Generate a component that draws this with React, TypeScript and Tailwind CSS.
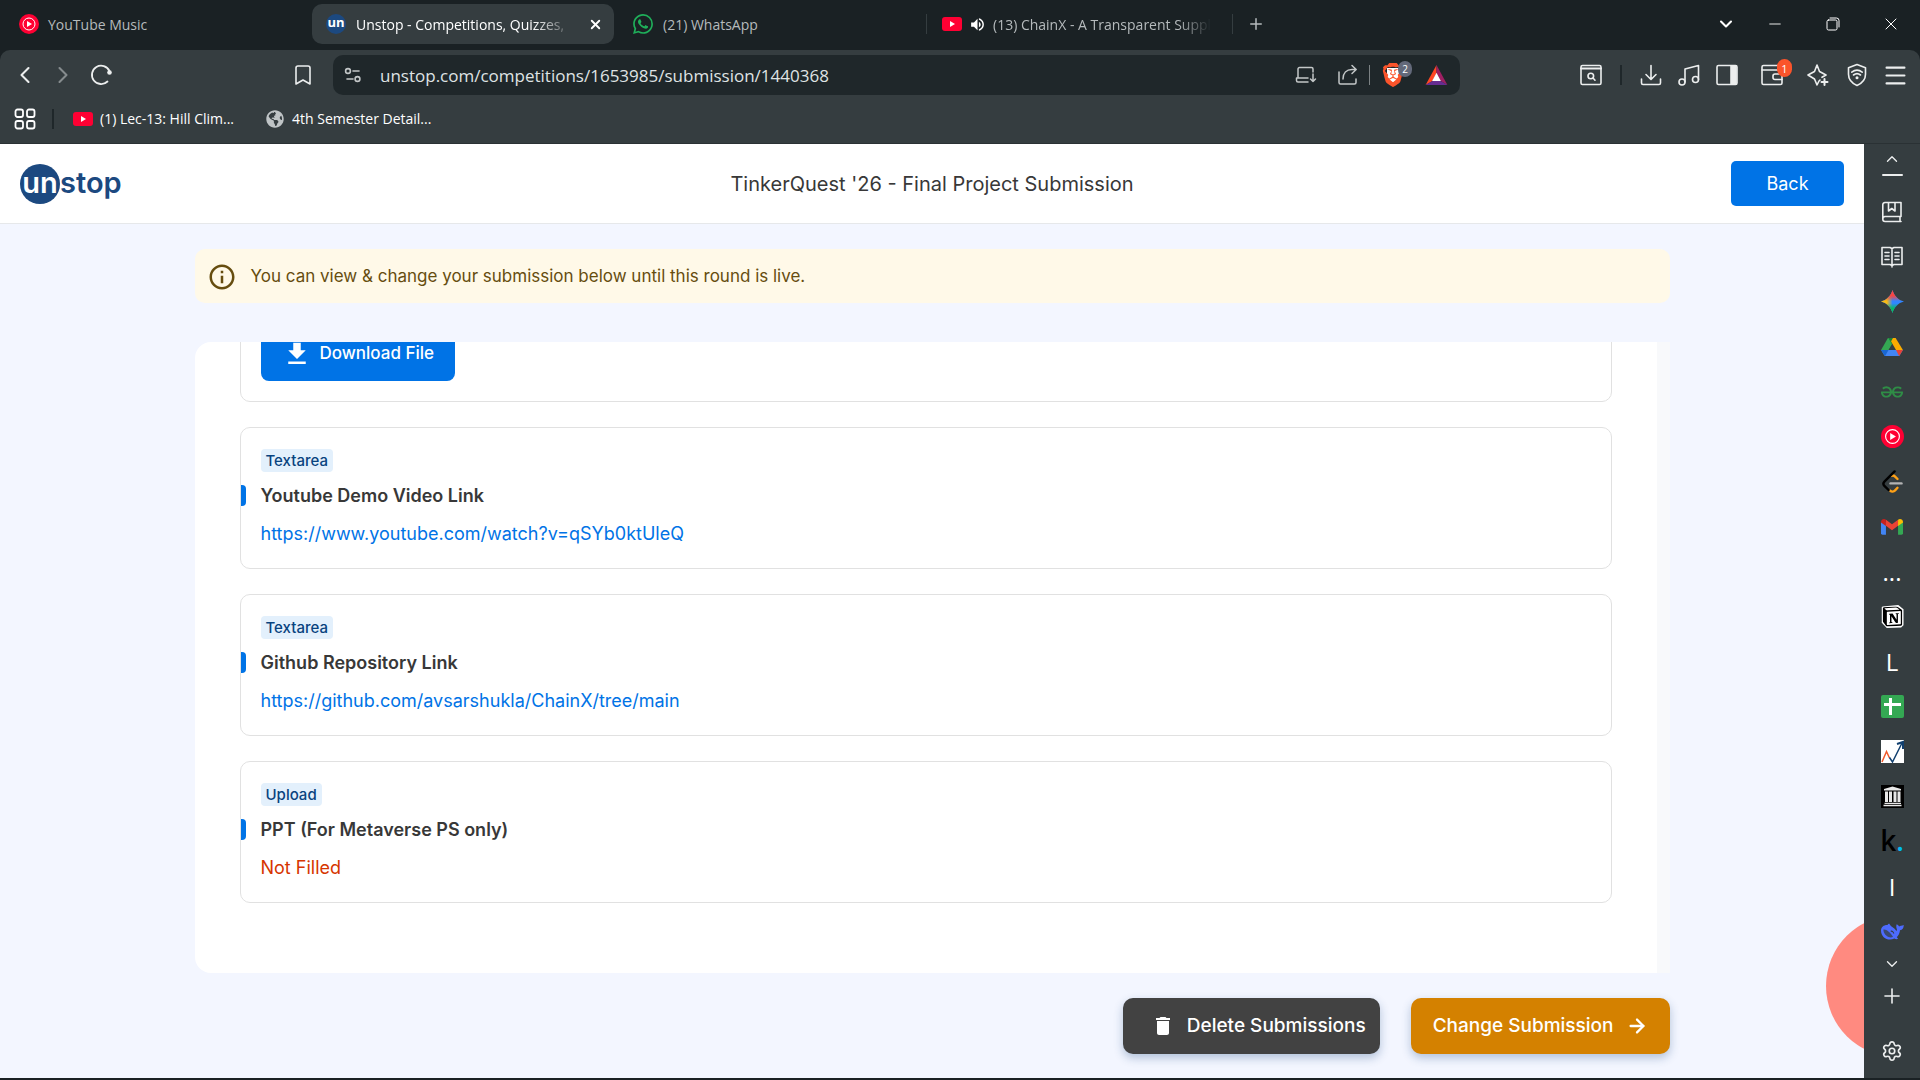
import React from 'react';
import {
  SiBrave,
  SiGeeksforgeeks,
  SiNotion,
  SiWhatsapp,
} from 'react-icons/si';
import { FaGlobeAmericas } from 'react-icons/fa';
import { MdDelete, MdOutlineInfo, MdDownload, MdVolumeUp } from 'react-icons/md';
import {
  ArrowRight,
  Bookmark,
  ChevronDown,
  ChevronLeft,
  ChevronRight,
  ChevronUp,
  Menu,
  Minus,
  Plus,
  Settings,
  X,
} from 'lucide-react';

// Shared styles for the browser chrome
const chromeFont = "font-['Open_Sans','Noto_Sans',sans-serif]";
const pageFont = "font-['Inter','Liberation_Sans',sans-serif]";
const toolButton = 'relative flex h-9 w-[38px] shrink-0 items-center justify-center';
const windowButton = 'flex h-10 w-[58px] items-center justify-center text-white';

const line = {
  fill: 'none',
  stroke: 'currentColor',
  strokeLinecap: 'round' as const,
  strokeLinejoin: 'round' as const,
};

/* ---------- logos ---------- */

const YoutubeMusicLogo: React.FC<{ className?: string }> = ({ className }) => (
  <svg viewBox="0 0 24 24" className={className}>
    <circle cx="12" cy="12" r="12" fill="#ff0033" />
    <circle cx="12" cy="12" r="7.2" fill="none" stroke="#fff" strokeWidth="1.2" />
    <path d="M9.6 8.4v7.2l6-3.6z" fill="#fff" />
  </svg>
);

const YoutubeLogo: React.FC = () => (
  <svg viewBox="0 0 20 14" className="h-3.5 w-5 shrink-0">
    <rect width="20" height="14" rx="3" fill="#ff0033" />
    <path d="M8 4v6l5-3z" fill="#fff" />
  </svg>
);

const GeminiLogo: React.FC = () => (
  <svg viewBox="0 0 24 24" className="size-[23px]">
    <defs>
      <linearGradient id="gemini-top" x1="0" y1="0" x2="0" y2="1">
        <stop offset="0" stopColor="#f94543" />
        <stop offset="0.25" stopColor="#f94543" />
        <stop offset="0.48" stopColor="#f94543" stopOpacity="0" />
      </linearGradient>
      <linearGradient id="gemini-left" x1="0" y1="0" x2="1" y2="0">
        <stop offset="0" stopColor="#fabc12" />
        <stop offset="0.25" stopColor="#fabc12" />
        <stop offset="0.5" stopColor="#fabc12" stopOpacity="0" />
      </linearGradient>
      <linearGradient id="gemini-bottom" x1="0" y1="1" x2="0" y2="0">
        <stop offset="0" stopColor="#08b962" />
        <stop offset="0.2" stopColor="#08b962" />
        <stop offset="0.42" stopColor="#08b962" stopOpacity="0" />
      </linearGradient>
    </defs>
    {['#3186ff', 'url(#gemini-left)', 'url(#gemini-top)', 'url(#gemini-bottom)'].map((fill) => (
      <path key={fill} fill={fill} d="M12 0c1.500 6 6 10.500 12 12-6 1.500-10.500 6-12 12-1.500-6-6-10.500-12-12 6-1.500 10.500-6 12-12z" />
    ))}
  </svg>
);

const DriveLogo: React.FC = () => (
  <svg viewBox="0 0 24 22" className="h-5 w-[22px]">
    <path d="M8 1h8l-4 7-3.800 6.400H0L7 2z" fill="#34a853" />
    <path d="M8 1h4l2 4-2 3z" fill="#188038" />
    <path d="M12 1h4l8 13.400h-7.600L10.600 4z" fill="#fbab00" />
    <path d="M8.500 1h4.500l-2 3.800z" fill="#188038" />
    <path d="M12 8.400l3.500 6h-7z" fill="#353d40" />
    <path d="M0 14.400h24L20 21H4z" fill="#4285f4" />
    <path d="M0 14.400h8.200L4.400 21H4z" fill="#1967d2" />
    <path d="M24 14.400h-7.600L19.800 21h.2z" fill="#ea4335" />
  </svg>
);

const LeetcodeLogo: React.FC = () => (
  <svg viewBox="0 0 24 24" className="size-6" fill="none" strokeWidth="2.400" strokeLinecap="round">
    <path d="M17.500 17.800l-2.400 2.600a3.600 3.600 0 0 1-5 .2" stroke="#ffa116" />
    <path d="M17.500 9l-2.400-2.400a3.400 3.400 0 0 0-3.600-.8" stroke="#ffa116" />
    <path d="M14.600 1.400L4.400 11.600a3 3 0 0 0 0 4.200l4.200 4.200" stroke="#000" />
    <path d="M10.500 13.400h11" stroke="#b3b3b3" />
  </svg>
);

const GmailLogo: React.FC = () => (
  <svg viewBox="0 0 24 18" className="h-[17px] w-[22px]">
    <path d="M0 4h5.400v14H1.600A1.600 1.600 0 0 1 0 16.400z" fill="#4285f4" />
    <path d="M18.600 4H24v12.400a1.600 1.600 0 0 1-1.600 1.600h-3.800z" fill="#34a853" />
    <path d="M5.400 1.600L12 6.600l6.600-5v6.600L12 13.200 5.400 8.200z" fill="#ea4335" />
    <path d="M18.600 1.600c2.200-1.600 5.400-.3 5.400 2.500v.4l-5.400 4z" fill="#fbbc04" />
    <path d="M5.400 1.600C3.200 0 0 1.300 0 4.100v.4l5.400 4z" fill="#c5221f" />
  </svg>
);

const NotionLogo: React.FC = () => (
  <svg viewBox="0 0 24 24" className="size-[23px]">
    <path d="M1.500 1.500L18 0l5.500 4.500V21L21 23.500 6 24 .8 18.500V2.500z" fill="#fff" />
    <SiNotion x="1.500" y="1.500" size={21} color="#000" />
  </svg>
);

const SheetLogo: React.FC = () => (
  <svg viewBox="0 0 23 23" className="size-[23px]">
    <rect width="23" height="23" rx="2" fill="#34a853" />
    <path d="M9.500 3v17M3 9.500h17" stroke="#fff" strokeWidth="3" />
  </svg>
);

const ChartLogo: React.FC = () => (
  <svg viewBox="0 0 23 23" className="size-[23px]" fill="none" strokeWidth="1.500">
    <rect width="23" height="23" fill="#fff" />
    <path d="M1 22L5.500 11.500 8.500 18" stroke="#f0592a" />
    <path d="M8.500 17.500l3 4.500L21 3" stroke="#12406f" />
    <path d="M16 4l6-2v7" stroke="#12406f" strokeWidth="2" />
  </svg>
);

const ArchiveLogo: React.FC = () => (
  <svg viewBox="0 0 23 23" className="size-[23px]">
    <rect width="23" height="23" fill="#000" />
    <path
      d="M11.500 1.500L20 4v1.500H3V4zM4 6.500h3V17H4zM8 6.500h3V17H8zM12.500 6.500h3V17h-3zM16.500 6.500h3V17h-3zM3.500 17.700h16.500v1.300H3.500zM2.500 19.800H20.500v1.400H2.500z"
      fill="#e8e8e8"
    />
  </svg>
);

const WhaleLogo: React.FC = () => (
  <svg viewBox="0 0 24 18" className="h-[18px] w-6">
    <path
      d="M1 7.500C1 4 4 1.800 7.500 2c.4-.8 1-1.300 1.900-1.300.5 2 2.800 3 4.600 4.600 1.200 1 1.900 2.200 2.500 2.700.6-.6.500-1.500.2-2.300-.5-1.400-.6-3 0-4.400 1.200.4 1.900 1.300 2.400 2.200.9-1 2.900-.5 4.600-1.500.2 2.600-1.200 5-3.700 5.300-.3 3-1.500 5.300-3.200 7l1.300 1.500c-1.300.8-2.600.5-3.700-.3C8.500 18.500 1 15 1 7.500z"
      fill="#4d6bfe"
    />
    <path d="M3.400 6.500c3-.6 7 3.200 9.600 7.300-2 1.200-4.500.6-6.500-1C4.600 11.200 3.300 9 3.400 6.500z" fill="#353d40" opacity="0.75" />
    <path d="M10.800 8.300c1.400-.4 2.600.6 2.900 2.200" stroke="#353d40" strokeWidth="1.200" fill="none" />
  </svg>
);

const BatLogo: React.FC = () => (
  <svg viewBox="0 0 24 22" className="h-5 w-[23px]">
    <path d="M12 0L0 22l7.500-4.300L12 9z" fill="#ff4724" />
    <path d="M12 0l12 22-7.500-4.300L12 9z" fill="#9e1f63" />
    <path d="M0 22h24l-7.500-4.300h-9z" fill="#662d91" />
    <path d="M12 8.600l4.800 9.100H7.200z" fill="#fff" />
  </svg>
);

const UnstopLogo: React.FC = () => (
  <a href="#home" aria-label="unstop" className="flex items-center text-[29px] leading-10 font-semibold text-[#1c4980]">
    <span className="flex size-10 items-center justify-center rounded-full bg-[#1c4980] pb-0.5 text-white">un</span>
    <span className="pb-0.5">stop</span>
  </a>
);

/* ---------- tab strip ---------- */

const TabStrip: React.FC = () => (
  <div className="flex h-[50px] items-center bg-[#1a2124] pb-0.5 pl-[5px] text-[14px] text-[#b5babc]">
    <div role="tablist" className="flex h-10 items-center gap-[5px]">
      <button role="tab" className="flex h-10 w-[302px] items-center gap-[9px] px-3.5">
        <YoutubeMusicLogo className="size-5" />
        <span>YouTube Music</span>
      </button>
      <div className="flex h-10 w-[302px] items-center rounded-[10px] bg-[#353d40] pr-[9px] pl-3.5 text-white">
        <button role="tab" aria-selected="true" className="flex h-10 min-w-0 flex-1 items-center gap-2.5">
          <span className="flex size-5 shrink-0 items-center justify-center rounded-full bg-[#1c4980] pb-0.5 text-[13px] font-bold">un</span>
          <span className="whitespace-nowrap mask-r-from-85% mask-r-to-105%">Unstop - Competitions, Quizzes,</span>
        </button>
        <button aria-label="Close tab" className="flex w-5 items-center justify-center">
          <X size={15} strokeWidth={3} />
        </button>
      </div>
      <button role="tab" className="flex h-10 w-[302px] items-center gap-2.5 px-3.5">
        <SiWhatsapp className="size-5 text-[#1faf5a]" />
        <span>(21) WhatsApp</span>
      </button>
      <button role="tab" className="flex h-5 w-[307px] items-center gap-[7px] border-x border-[#353d40] pl-[15px]">
        <YoutubeLogo />
        <MdVolumeUp className="size-[17px] shrink-0 text-white" />
        <span className="whitespace-nowrap mask-r-from-85%">(13) ChainX - A Transparent Suppl</span>
      </button>
      <button aria-label="New tab" className="ml-1.5 flex size-6 items-center justify-center">
        <Plus size={18} />
      </button>
    </div>
    <div className="ml-auto flex">
      <button aria-label="Search tabs" className="flex h-10 w-10 items-center justify-center text-white">
        <ChevronDown size={20} strokeWidth={2.5} />
      </button>
      <button aria-label="Minimize" className={windowButton}>
        <Minus size={18} strokeWidth={1.2} />
      </button>
      <button aria-label="Restore" className={windowButton}>
        <svg viewBox="0 0 14 14" className="size-3.5" {...line}>
          <rect x="1" y="3" width="10" height="10" rx="1.5" />
          <path d="M4 1h6.500A2.500 2.500 0 0 1 13 3.500V10" />
        </svg>
      </button>
      <button aria-label="Close" className={windowButton}>
        <X size={20} strokeWidth={1.2} />
      </button>
    </div>
  </div>
);

/* ---------- toolbar ---------- */

const AddressBar: React.FC = () => (
  <div className="flex h-10 flex-1 items-center rounded-[10px] bg-[#1f272a] pr-1 text-[#c3c7c8]">
    <button aria-label="Site information" className="flex h-10 w-10 shrink-0 items-center justify-center">
      <svg viewBox="0 0 18 16" className="h-4 w-[18px]" {...line} strokeWidth="1.600">
        <circle cx="4" cy="4" r="2.400" />
        <path d="M9 4h6" />
        <circle cx="13.500" cy="12" r="2.400" />
        <path d="M3 12h6" />
      </svg>
    </button>
    <input
      aria-label="Address"
      defaultValue="unstop.com/competitions/1653985/submission/1440368"
      className="h-10 min-w-0 flex-1 bg-transparent pl-[7px] text-[17px] text-[#dfe3e4] outline-none"
    />
    <button aria-label="Install app" className="flex h-9 w-[42px] items-center justify-center">
      <svg viewBox="0 0 22 18" className="h-[18px] w-[22px]" {...line} strokeWidth="1.500">
        <path d="M18 6V3a1.500 1.500 0 0 0-1.500-1.500h-12A1.500 1.500 0 0 0 3 3v9M13 12H1.500v2.500A1.500 1.500 0 0 0 3 16h10" />
        <path d="M18 8v7.500M15.500 13l2.500 2.500 2.500-2.500" />
      </svg>
    </button>
    <button aria-label="Share" className="flex h-9 w-[42px] items-center justify-center">
      <svg viewBox="0 0 22 22" className="size-[22px]" {...line} strokeWidth="1.500">
        <path d="M2 8v10.500A1.500 1.500 0 0 0 3.500 20h14a1.500 1.500 0 0 0 1.500-1.500V15M6 15c0-6 3.500-9.500 9-9.500h4M15 1.500l4.200 4-4.200 4" />
      </svg>
    </button>
    <span className="h-5 w-px bg-[#7b8183]" />
    <button aria-label="Brave Shields" className="relative flex h-9 w-[46px] items-center justify-center">
      <svg viewBox="0 0 24 24" className="size-6">
        <path d="M6 5h12v10l-6 7-6-7z" fill="#fff" />
        <SiBrave size={24} color="#fb542b" />
      </svg>
      <span className="absolute top-1 right-1 flex h-4 w-3.5 items-center justify-center rounded-full bg-[#63697a] text-[10px] leading-none text-white">2</span>
    </button>
    <button aria-label="Rewards" className="flex h-9 w-10 items-center justify-center">
      <BatLogo />
    </button>
  </div>
);

const Toolbar: React.FC = () => (
  <div className="flex h-[50px] items-center px-1.5 text-[#eceeee]">
    <button aria-label="Go back" className={toolButton}>
      <ChevronLeft size={28} strokeWidth={1.8} />
    </button>
    <button aria-label="Go forward" className={`${toolButton} text-[#868c8e]`}>
      <ChevronRight size={28} strokeWidth={1.8} />
    </button>
    <button aria-label="Reload" className={toolButton}>
      <svg viewBox="0 0 24 24" className="size-6" {...line} strokeWidth="1.800">
        <path d="M18.500 18.500A9.200 9.200 0 1 1 20.500 8" />
        <circle cx="20.500" cy="9.500" r="2.300" fill="currentColor" stroke="none" />
      </svg>
    </button>
    <div className="mr-28 ml-[164px] flex min-w-0 flex-1 items-center gap-[11px]">
      <button aria-label="Bookmark this page" className={toolButton}>
        <Bookmark size={24} strokeWidth={1.6} />
      </button>
      <AddressBar />
    </div>
    <button aria-label="Search page" className={toolButton}>
      <svg viewBox="0 0 22 22" className="size-[22px]" {...line} strokeWidth="1.600">
        <rect x="1" y="1.500" width="20" height="19" rx="1.500" />
        <path d="M1 4.500h20" strokeWidth="2" />
        <circle cx="10.800" cy="12" r="2.800" />
        <path d="M13 14l2 2.200" />
      </svg>
    </button>
    <span className="mx-2.5 h-5 w-0.5 bg-[#1f272a]" />
    <button aria-label="Downloads" className={toolButton}>
      <svg viewBox="0 0 22 22" className="size-[22px]" {...line} strokeWidth="1.600">
        <path d="M11 1.500V15M6 10.500l5 5 5-5M1.500 15v4A1.500 1.500 0 0 0 3 20.500h16a1.500 1.500 0 0 0 1.500-1.500v-4" />
      </svg>
    </button>
    <button aria-label="Media" className={toolButton}>
      <svg viewBox="0 0 22 22" className="size-[22px]" {...line} strokeWidth="1.600">
        <circle cx="4" cy="18" r="3" />
        <circle cx="17.500" cy="15.500" r="3" />
        <path d="M7 18V5l13.500-3.500v14M7 9" />
      </svg>
    </button>
    <button aria-label="Side panel" className={toolButton}>
      <svg viewBox="0 0 22 22" className="size-[22px]" {...line} strokeWidth="1.600">
        <rect x="1" y="1.500" width="20" height="19" rx="1.500" />
        <path d="M15 2h5v18h-5z" fill="currentColor" />
      </svg>
    </button>
    <button aria-label="Wallet" className="relative flex h-9 w-[52px] items-center justify-center">
      <svg viewBox="0 0 22 22" className="size-[22px]" {...line} strokeWidth="1.600">
        <rect x="1" y="1.500" width="20" height="19" rx="1.500" />
        <path d="M1 6h20M21 10h-7a2 2 0 0 0-2 2v1.500a2 2 0 0 0 2 2h7" />
      </svg>
      <span className="absolute top-0.5 right-1.5 flex h-[18px] w-[15px] items-center justify-center rounded-full bg-[#fb542b] text-[11px] leading-none text-white">1</span>
    </button>
    <button aria-label="Leo AI" className="flex h-9 w-10 items-center justify-center">
      <svg viewBox="0 0 22 22" className="size-[22px]" {...line} strokeWidth="1.600">
        <path d="M13 16l-1 1-2 4-2.500-6L1 11l6.500-3.500L10 1l2.500 6.500L19 11l-4 2.300" />
        <path d="M17.500 15v6M14.500 18h6" strokeWidth="2" />
      </svg>
    </button>
    <button aria-label="VPN" className={toolButton}>
      <svg viewBox="0 0 22 24" className="h-6 w-[22px]" {...line} strokeWidth="1.600">
        <path d="M11 1.500l8.500 3.300v6.400c0 5-3 8.800-8.500 11.300-5.500-2.500-8.500-6.300-8.500-11.300V4.800z" />
        <path d="M5.800 9.200c3.200-2.600 7.200-2.600 10.400 0M7.500 12c2.200-1.700 4.800-1.700 7 0" />
        <circle cx="11" cy="14.800" r="1.500" fill="currentColor" stroke="none" />
      </svg>
    </button>
    <button aria-label="Menu" className={toolButton}>
      <Menu size={27} strokeWidth={1.8} />
    </button>
  </div>
);

const BookmarkBar: React.FC = () => (
  <nav aria-label="Bookmarks" className="flex h-11 items-center border-b border-[#2a3134] pb-1.5 pl-3.5 text-[14px] text-white">
    <button aria-label="All bookmarks" className="flex size-[22px] items-center justify-center">
      <svg viewBox="0 0 22 22" className="size-[22px]" {...line} strokeWidth="1.800">
        <rect x="1.500" y="1.500" width="7.500" height="7.500" rx="2" />
        <rect x="13" y="1.500" width="7.500" height="7.500" rx="2" />
        <rect x="1.500" y="13" width="7.500" height="7.500" rx="2" />
        <rect x="13" y="13" width="7.500" height="7.500" rx="2" />
      </svg>
    </button>
    <span className="mr-[19px] ml-4 h-5 w-0.5 bg-[#1f272a]" />
    <a href="#lec-13" className="flex items-center gap-[7px]">
      <YoutubeLogo />
      (1) Lec-13: Hill Clim...
    </a>
    <a href="#semester" className="ml-8 flex items-center gap-2">
      <FaGlobeAmericas className="size-[18px] text-[#bfc4c6]" />
      4th Semester Detail...
    </a>
  </nav>
);

/* ---------- sidebar ---------- */

const sidebarItems: { label: string; icon: React.ReactNode }[] = [
  {
    label: 'Bookmarks',
    icon: (
      <svg viewBox="0 0 22 22" className="size-[22px]" {...line} strokeWidth="1.600">
        <path d="M20 15.500V1.500H4A2.200 2.200 0 0 0 1.800 3.700v14.600A2.200 2.200 0 0 0 4 20.500h16M20 15.500H4a2.400 2.400 0 0 0-2.200 2.400M19 15.500v5M7.500 1.500V10l3.300-2.500L14 10V1.500" />
      </svg>
    ),
  },
  {
    label: 'Reading list',
    icon: (
      <svg viewBox="0 0 22 22" className="size-[22px]" {...line} strokeWidth="1.600">
        <path d="M11 3.500V21M1 1.500h8l2 1 2-1h8v17h-8l-2 1-2-1H1z" />
        <path d="M4 6.500h4M4 10h4M4 13.500h4M14 6.500h4M14 10h4M14 13.500h4" />
      </svg>
    ),
  },
  { label: 'Gemini', icon: <GeminiLogo /> },
  { label: 'Drive', icon: <DriveLogo /> },
  { label: 'GeeksforGeeks', icon: <SiGeeksforgeeks className="size-[22px] text-[#2f8d46]" /> },
  { label: 'YouTube Music', icon: <YoutubeMusicLogo className="size-[23px]" /> },
  { label: 'LeetCode', icon: <LeetcodeLogo /> },
  { label: 'Gmail', icon: <GmailLogo /> },
  { label: 'More', icon: <span className="text-[24px] leading-6 text-white">...</span> },
  { label: 'Notion', icon: <NotionLogo /> },
  { label: 'L', icon: <span className="text-[24px] leading-6 text-white">L</span> },
  { label: 'Sheet', icon: <SheetLogo /> },
  { label: 'Stocks', icon: <ChartLogo /> },
  { label: 'Archive', icon: <ArchiveLogo /> },
  {
    label: 'k.',
    icon: (
      <span className="pb-1 text-[28px] leading-6 font-semibold text-black">
        k<span className="text-[#00bcf2]">.</span>
      </span>
    ),
  },
  { label: 'I', icon: <span className="text-[24px] leading-6 text-white">I</span> },
  { label: 'DeepSeek', icon: <WhaleLogo /> },
];

const Sidebar: React.FC = () => (
  <aside className="flex w-14 shrink-0 flex-col items-center bg-[#353d40] text-[#eceeee]">
    <button aria-label="Scroll up" className="flex h-[30px] w-full items-center justify-center">
      <ChevronUp size={18} strokeWidth={1.8} />
    </button>
    <span className="mb-[13px] h-0.5 w-[21px] rounded bg-[#eceeee]" />
    {sidebarItems.map((item) => (
      <button key={item.label} aria-label={item.label} className="flex h-[45px] w-full shrink-0 items-center justify-center">
        {item.icon}
      </button>
    ))}
    <button aria-label="Scroll down" className="flex h-5 w-full items-center justify-center">
      <ChevronDown size={18} strokeWidth={1.8} />
    </button>
    <button aria-label="Add item" className="flex h-11 w-full items-center justify-center">
      <Plus size={24} strokeWidth={1.6} />
    </button>
    <button aria-label="Settings" className="mt-auto flex h-[54px] w-full items-center justify-center">
      <Settings size={22} strokeWidth={1.8} />
    </button>
  </aside>
);

/* ---------- submission page ---------- */

interface Field {
  type: string;
  title: string;
  link?: string;
}

const fields: Field[] = [
  { type: 'Textarea', title: 'Youtube Demo Video Link', link: 'https://www.youtube.com/watch?v=qSYb0ktUleQ' },
  { type: 'Textarea', title: 'Github Repository Link', link: 'https://github.com/avsarshukla/ChainX/tree/main' },
  { type: 'Upload', title: 'PPT (For Metaverse PS only)' },
];

const FieldCard: React.FC<{ field: Field }> = ({ field }) => (
  <section className="flex shrink-0 flex-col items-start rounded-[10px] border border-[#e1e1e1] pt-[21px] pb-[23px]">
    <span className="ml-5 rounded bg-[#e3f0fc] px-[5px] text-[15px] leading-[23px] font-medium text-[#09437f]">{field.type}</span>
    <h2 className="mt-[13px] flex items-center text-[18px] leading-[21px] font-semibold text-[#383838]">
      <span className="mr-[15px] h-[21px] w-[5px] rounded-r bg-[#0073e6]" />
      {field.title}
    </h2>
    <div className="mt-[17px] ml-5 text-[18px] leading-[22px]">
      {field.link ? (
        <a href={field.link} className="text-[#0073e6]">{field.link}</a>
      ) : (
        <p className="text-[#d63500]">Not Filled</p>
      )}
    </div>
  </section>
);

const SubmissionPage: React.FC = () => (
  <div className={`relative flex min-w-0 flex-1 flex-col overflow-hidden bg-[#f3f6ff] ${pageFont}`}>
    <header className="grid h-20 shrink-0 grid-cols-[1fr_auto_1fr] items-center border-b border-[#e6e8ea] bg-white px-5">
      <UnstopLogo />
      <h1 className="text-[20px] leading-6 text-[#383838]">TinkerQuest '26 - Final Project Submission</h1>
      <button className="h-[45px] w-[113px] justify-self-end rounded-[5px] bg-[#0073e6] text-[18px] text-white">Back</button>
    </header>

    <main className="mx-auto flex min-h-0 w-full max-w-[1475px] flex-1 flex-col pt-[25px] pb-6">
      <div className="flex h-[54px] shrink-0 items-center gap-3.5 rounded-[10px] bg-[#fff9e8] px-3 pt-0.5 text-[17px] text-[#664d0f]">
        <MdOutlineInfo className="size-[30px]" />
        <p>You can view &amp; change your submission below until this round is live.</p>
      </div>

      <div className="mt-[39px] flex min-h-0 flex-1 overflow-hidden rounded-l-2xl bg-white">
        <div className="flex flex-1 flex-col justify-end gap-[25px] overflow-hidden px-[45px] pb-[70px]">
          <section className="shrink-0 rounded-[10px] border border-[#e1e1e1] px-5 pt-24 pb-5">
            <button className="flex h-[54px] items-center gap-2 rounded-lg bg-[#0073e6] px-[21px] text-[17px] font-medium text-white">
              <MdDownload className="size-[30px]" />
              Download File
            </button>
          </section>
          {fields.map((field) => (
            <FieldCard key={field.title} field={field} />
          ))}
        </div>
        <div className="w-[13px] bg-[#f8f9fb]" />
      </div>

      <div className="mt-[25px] flex shrink-0 justify-end gap-[31px] text-[19px] font-medium text-white">
        <button className="flex h-14 items-center gap-3 rounded-[10px] bg-[#424242] pr-3.5 pl-7 shadow-[0_4px_10px_#1c49804d]">
          <MdDelete className="size-6" />
          Delete Submissions
        </button>
        <button className="flex h-14 items-center gap-3 rounded-[10px] bg-[#d48100] px-[22px] shadow-[0_4px_10px_#1c49804d]">
          Change Submission
          <ArrowRight size={22} strokeWidth={2.5} />
        </button>
      </div>
    </main>

    <button aria-label="Help" className="absolute -right-[104px] bottom-[21px] size-[142px] rounded-full bg-[#ff8a80]" />
  </div>
);

const App: React.FC = () => (
  <div className={`flex h-screen flex-col bg-[#1a2124] ${chromeFont}`}>
    <TabStrip />
    <div className="rounded-t-[10px] bg-[#353d40]">
      <Toolbar />
      <BookmarkBar />
    </div>
    <div className="mb-0.5 flex min-h-0 flex-1">
      <SubmissionPage />
      <Sidebar />
    </div>
  </div>
);

export default App;
